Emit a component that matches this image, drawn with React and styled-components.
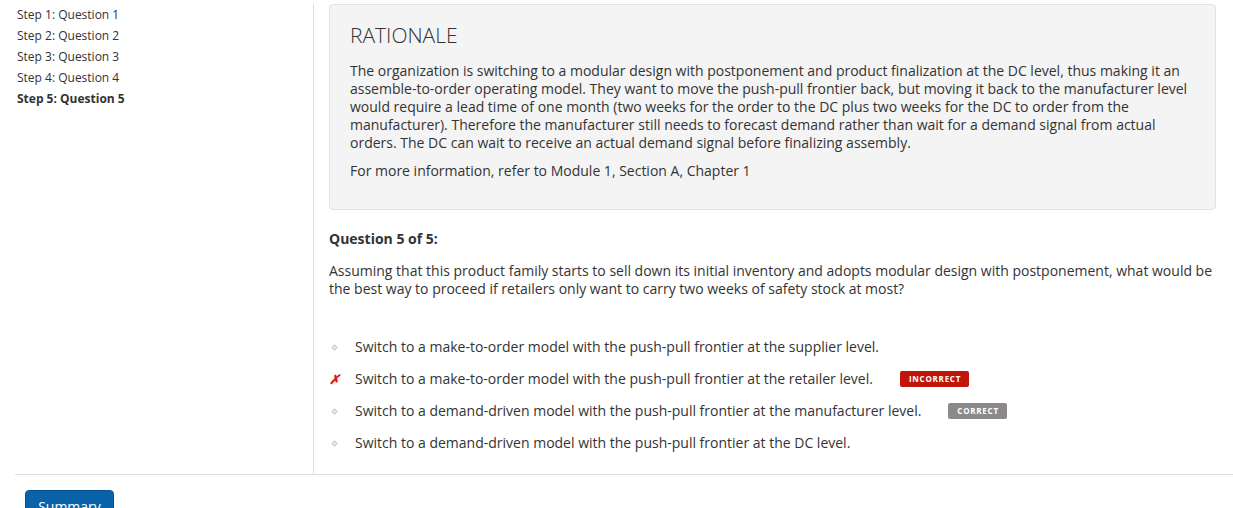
import React from "react";
import styled, { createGlobalStyle } from "styled-components";

const Global = createGlobalStyle`
  html, body { margin: 0; padding: 0; background: #fff; }
  body { font-family: "Open Sans", "Liberation Sans", sans-serif; color: #333; }
  * { box-sizing: border-box; }
`;

const Page = styled.div`
  padding: 4px 0 0 15px;
  width: 1233px;
`;

const Row = styled.div`
  display: flex;
  border-bottom: 1px solid #ddd;
`;

const Sidebar = styled.nav`
  width: 299px;
  flex: none;
  border-right: 1px solid #ddd;
  padding: 0 0 0 2px;
`;

const StepLink = styled.div`
  font-size: 12px;
  line-height: 21px;
  color: #333;
  font-weight: ${(p) => (p.$active ? 700 : 400)};
`;

const Main = styled.main`
  flex: 1;
  padding: 0 17px 22px 15px;
`;

const Rationale = styled.section`
  background: #f4f4f4;
  border: 1px solid #e3e3e3;
  border-radius: 4px;
  padding: 19px 20px 19px;
`;

const RTitle = styled.h2`
  margin: 0 0 15px;
  font-size: 21px;
  font-weight: 300;
  line-height: 23px;
  color: #333;
`;

const RText = styled.p`
  margin: 0 0 10px;
  font-size: 14px;
  line-height: 18px;
  &:last-child { margin-bottom: 10px; }
`;

const QHead = styled.h3`
  margin: 20px 0 14px;
  font-size: 14px;
  line-height: 18px;
  font-weight: 700;
`;

const QText = styled.p`
  margin: 0 0 40px;
  font-size: 14px;
  line-height: 18px;
`;

const Options = styled.ul`
  list-style: none;
  margin: 0;
  padding: 0;
  display: flex;
  flex-direction: column;
  gap: 14px;
`;

const Option = styled.li`
  display: flex;
  align-items: center;
  font-size: 14px;
  line-height: 18px;
`;

const Mark = styled.span`
  width: 26px;
  flex: none;
  display: flex;
  align-items: center;
  padding-left: ${(p) => (p.$wrong ? "0" : "2px")};
  color: #e8141c;
  font-size: 13px;
  font-weight: 700;
  font-style: italic;
`;

const Badge = styled.span`
  margin-left: 27px;
  height: 16px;
  padding: 0 8px 0 9px;
  border-radius: 2px;
  display: inline-flex;
  align-items: center;
  font-size: 8px;
  font-weight: 700;
  letter-spacing: 0.75px;
  color: #fff;
  background: ${(p) => (p.$kind === "wrong" ? "#c0150b" : "#8a8a8a")};
`;

const Footer = styled.div`
  padding: 15px 0 0 10px;
`;

const Button = styled.button`
  font-family: inherit;
  font-size: 14px;
  line-height: 20px;
  color: #fff;
  background: #0a63a9;
  border: 1px solid #08538f;
  border-radius: 4px;
  padding: 6px 12px;
  width: 89px;
`;

const Bullet = () => (
  <svg width="7" height="7" viewBox="0 0 7 7">
    <path d="M3.5 0.8 L6.2 3.5 L3.5 6.2 L0.8 3.5 Z" fill="#e6e6e6" stroke="#bdbdbd" strokeWidth="1" />
  </svg>
);

const steps = ["Step 1: Question 1", "Step 2: Question 2", "Step 3: Question 3", "Step 4: Question 4", "Step 5: Question 5"];

const options = [
  { text: "Switch to a make-to-order model with the push-pull frontier at the supplier level." },
  { text: "Switch to a make-to-order model with the push-pull frontier at the retailer level.", wrong: true, badge: "wrong" },
  { text: "Switch to a demand-driven model with the push-pull frontier at the manufacturer level.", badge: "right" },
  { text: "Switch to a demand-driven model with the push-pull frontier at the DC level." },
];

export default function App() {
  return (
    <>
      <Global />
      <Page>
        <Row>
          <Sidebar>
            {steps.map((s, i) => (
              <StepLink key={s} $active={i === 4}>{s}</StepLink>
            ))}
          </Sidebar>
          <Main>
            <Rationale>
              <RTitle>RATIONALE</RTitle>
              <RText>
                The organization is switching to a modular design with postponement and product finalization at the DC level, thus making it an assemble-to-order operating model. They want to move the push-pull frontier back, but moving it back to the manufacturer level would require a lead time of one month (two weeks for the order to the DC plus two weeks for the DC to order from the manufacturer). Therefore the manufacturer still needs to forecast demand rather than wait for a demand signal from actual orders. The DC can wait to receive an actual demand signal before finalizing assembly.
              </RText>
              <RText>For more information, refer to Module 1, Section A, Chapter 1</RText>
            </Rationale>
            <QHead>Question 5 of 5:</QHead>
            <QText>
              Assuming that this product family starts to sell down its initial inventory and adopts modular design with postponement, what would be the best way to proceed if retailers only want to carry two weeks of safety stock at most?
            </QText>
            <Options>
              {options.map((o) => (
                <Option key={o.text}>
                  <Mark $wrong={o.wrong}>{o.wrong ? "✗" : <Bullet />}</Mark>
                  <span>{o.text}</span>
                  {o.badge && (
                    <Badge $kind={o.badge}>{o.badge === "wrong" ? "INCORRECT" : "CORRECT"}</Badge>
                  )}
                </Option>
              ))}
            </Options>
          </Main>
        </Row>
        <Footer>
          <Button>Summary</Button>
        </Footer>
      </Page>
    </>
  );
}
